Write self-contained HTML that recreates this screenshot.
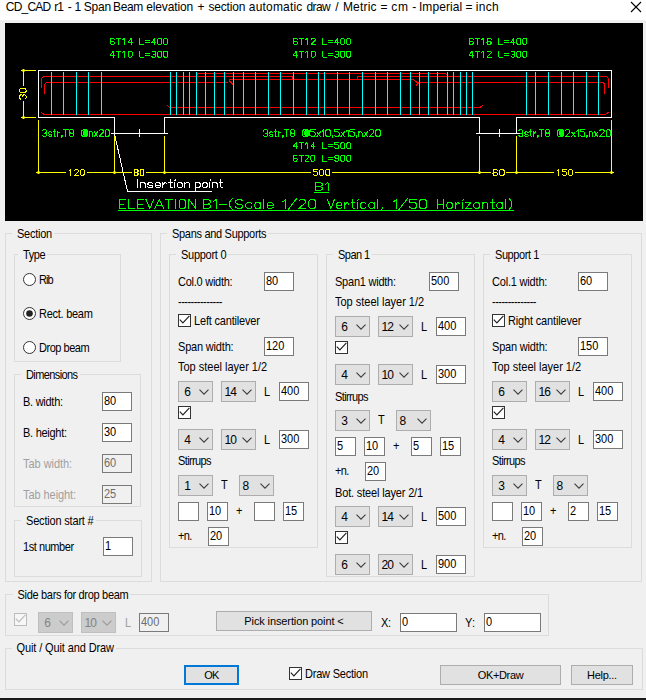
<!DOCTYPE html>
<html><head><meta charset="utf-8"><title>CD_CAD</title>
<style>
*{box-sizing:border-box}
html,body{margin:0;padding:0}
body{width:646px;height:700px;position:relative;overflow:hidden;background:#f0f0f0;font-family:"Liberation Sans",sans-serif;font-size:11px;color:#000}
.abs{position:absolute}
.tw{position:absolute;top:-1px;font-size:12px;line-height:16px;white-space:pre;color:#000;transform:scaleY(1.08);transform-origin:0 60%}
.t{position:absolute;white-space:pre;line-height:13px;font-size:11px;transform:scaleY(1.1);transform-origin:0 50%}
.gl{background:#f0f0f0}
.dl{color:#a0a0a0}
.g{position:absolute;border:1px solid #dcdcdc}
.in{position:absolute;border:1px solid #7a7a7a;background:#fff;padding:0 0 0 1px;white-space:pre;overflow:hidden}
.v{display:inline-block;transform:scaleY(1.1);transform-origin:0 50%}
.in.dis{background:#f0f0f0;color:#6d6d6d}
.cb{position:absolute;border:1px solid #adadad;background:#e1e1e1;padding:0 0 0 6px;white-space:pre;font-size:12px}
.cb .v{transform:scaleY(1.12)}
.cb.dis{background:#cccccc;border-color:#bfbfbf;color:#838383}
.chev{position:absolute}
.ck{position:absolute;width:13px;height:13px;border:1px solid #333;background:#fff}
.bt{position:absolute;border:1px solid #adadad;background:#e1e1e1;text-align:center;white-space:pre}
.bt.df{border:2px solid #0078d7}
</style></head>
<body>
<div class="abs" style="left:0;top:0;width:646px;height:20px;background:#fff"></div>
<span class="tw" style="left:5.8px;letter-spacing:-0.79px">CD_CAD</span>
<span class="tw" style="left:54.15px;letter-spacing:-1.0px">r1</span>
<span class="tw" style="left:67.75px;letter-spacing:0px">-</span>
<span class="tw" style="left:74.53px;letter-spacing:0px">1</span>
<span class="tw" style="left:83.8px;letter-spacing:-0.25px">Span</span>
<span class="tw" style="left:113.1px;letter-spacing:-0.417px">Beam</span>
<span class="tw" style="left:146.2px;letter-spacing:-0.131px">elevation</span>
<span class="tw" style="left:197.55px;letter-spacing:0px">+</span>
<span class="tw" style="left:208.45px;letter-spacing:-0.183px">section</span>
<span class="tw" style="left:248.8px;letter-spacing:0.194px">automatic</span>
<span class="tw" style="left:306.6px;letter-spacing:-0.667px">draw</span>
<span class="tw" style="left:335.32px;letter-spacing:0px">/</span>
<span class="tw" style="left:342.9px;letter-spacing:0.19px">Metric</span>
<span class="tw" style="left:380.4px;letter-spacing:0px">=</span>
<span class="tw" style="left:391.3px;letter-spacing:0.75px">cm</span>
<span class="tw" style="left:412.35px;letter-spacing:0px">-</span>
<span class="tw" style="left:418.9px;letter-spacing:0.086px">Imperial</span>
<span class="tw" style="left:465.4px;letter-spacing:0px">=</span>
<span class="tw" style="left:475.75px;letter-spacing:0.333px">inch</span>
<svg class="abs" style="left:630px;top:1px" width="12" height="12" viewBox="0 0 12 12"><path d="M1 1 L11 11 M11 1 L1 11" stroke="#000" stroke-width="1.1" fill="none"/></svg>
<svg class="abs" style="left:0;top:0" width="646" height="230" viewBox="0 0 646 230">
<rect x="5" y="23" width="638" height="198" fill="#000"/>
<path d="M41.5 88 V79.5 Q41.5 76.5 44.5 76.5 H292.5 V79.5 M357.5 79.5 V76.5 H605.5 Q608.5 76.5 608.5 79.5 V88 M44.5 94 V85.5 Q44.5 82.5 47.5 82.5 H228 M196.5 75 L198 73.5 H445.5 L447.5 75.2 M233 84.5 L229.5 81 L229.5 79.5 H413.5 L418 83.5 L416 85.5 M418 82.5 H602 Q604.5 82.5 604.5 85.5 V94 M41 112 L44 114.5 H605.5 L609 112 M167 105 L169.5 107.5 H480 L483 105" stroke="#ff0000" stroke-width="1" fill="none" shape-rendering="crispEdges"/>
<path d="M51.5 72 V115 M63.5 72 V115 M76.5 72 V115 M88.5 72 V115 M101.5 72 V115 M170.5 72 V115 M176.5 72 V115 M183.5 72 V115 M189.5 72 V115 M196.5 72 V115 M205.5 72 V115 M214.5 72 V115 M224.5 72 V115 M233.5 72 V115 M243.5 72 V115 M255.5 72 V115 M268.5 72 V115 M280.5 72 V115 M293.5 72 V115 M306.5 72 V115 M318.5 72 V115 M324.5 72 V115 M337.5 72 V115 M349.5 72 V115 M362.5 72 V115 M375.5 72 V115 M387.5 72 V115 M400.5 72 V115 M410.5 72 V115 M419.5 72 V115 M428.5 72 V115 M437.5 72 V115 M447.5 72 V115 M453.5 72 V115 M460.5 72 V115 M466.5 72 V115 M472.5 72 V115 M526.5 72 V115 M535.5 72 V115 M548.5 72 V115 M561.5 72 V115 M573.5 72 V115 M586.5 72 V115 M598.5 72 V115" stroke="#00ffff" stroke-width="1" fill="none" shape-rendering="crispEdges"/>
<path d="M38.5 117.5 V70.5 H611.5 V117.5 H516.5 V133.5 M479.5 133.5 V117.5 H164.5 V133.5 M114.5 133.5 V117.5 H38.5 M110.5 133.5 H168 M476 133.5 H520" stroke="#ffffff" stroke-width="1" fill="none" shape-rendering="crispEdges"/>
<path d="M139.5 129 V133 L138.5 133.5 L139.5 134.5 V137 M499.5 129 V133 L498.5 133.5 L499.5 134.5 V137" stroke="#ffffff" stroke-width="1" fill="none"/>
<path d="M114.5 134 L127.5 191.5 H212" stroke="#ffffff" stroke-width="1" fill="none" shape-rendering="crispEdges"/>
<path d="M21 70.5 H36 M21 117.5 H36 M23.5 70.5 V86 M23.5 101 V117.5 M38.5 119.5 V174 M114.5 136 V174 M164.5 136 V174 M479.5 136 V174 M516.5 136 V174 M611.5 119.5 V174 M36 172.5 H66 M87 172.5 H132 M146 172.5 H311 M332 172.5 H491 M506 172.5 H554 M575 172.5 H614" stroke="#ffff00" stroke-width="1" fill="none" shape-rendering="crispEdges"/>
<path d="M37.0 172.5 H40.0 M38.5 171.0 V174.0" stroke="#ffff00" stroke-width="1.6" fill="none"/>
<path d="M113.0 172.5 H116.0 M114.5 171.0 V174.0" stroke="#ffff00" stroke-width="1.6" fill="none"/>
<path d="M163.0 172.5 H166.0 M164.5 171.0 V174.0" stroke="#ffff00" stroke-width="1.6" fill="none"/>
<path d="M478.0 172.5 H481.0 M479.5 171.0 V174.0" stroke="#ffff00" stroke-width="1.6" fill="none"/>
<path d="M515.0 172.5 H518.0 M516.5 171.0 V174.0" stroke="#ffff00" stroke-width="1.6" fill="none"/>
<path d="M610.0 172.5 H613.0 M611.5 171.0 V174.0" stroke="#ffff00" stroke-width="1.6" fill="none"/>
<path d="M22.0 70.5 H25.0 M23.5 69.0 V72.0" stroke="#ffff00" stroke-width="1.6" fill="none"/>
<path d="M22.0 117.5 H25.0 M23.5 116.0 V119.0" stroke="#ffff00" stroke-width="1.6" fill="none"/>
<path d="M68.99 170.90 L70.38 169.50 L70.38 175.50 M74.33 170.50 L75.31 169.50 L77.29 169.50 L78.28 170.50 L78.28 171.50 L74.33 175.50 L78.28 175.50 M81.24 175.50 L83.21 175.50 L84.20 174.50 L84.20 170.50 L83.21 169.50 L81.24 169.50 L80.25 170.50 L80.25 174.50 L81.24 175.50" stroke="#ffff00" stroke-width="1.0" fill="none" stroke-linejoin="round" stroke-linecap="square" shape-rendering="crispEdges"/>
<path d="M135.17 172.50 L134.20 171.50 L134.20 170.50 L135.17 169.50 L137.11 169.50 L138.08 170.50 L138.08 171.50 L137.11 172.50 L135.17 172.50 L134.20 173.50 L134.20 174.50 L135.17 175.50 L137.11 175.50 L138.08 174.50 L138.08 173.50 L137.11 172.50 M140.99 175.50 L142.93 175.50 L143.90 174.50 L143.90 170.50 L142.93 169.50 L140.99 169.50 L140.02 170.50 L140.02 174.50 L140.99 175.50" stroke="#ffff00" stroke-width="1.0" fill="none" stroke-linejoin="round" stroke-linecap="square" shape-rendering="crispEdges"/>
<path d="M313.50 174.50 L314.52 175.50 L316.57 175.50 L317.60 174.50 L317.60 172.50 L316.57 171.50 L313.50 171.50 L313.50 169.50 L317.60 169.50 M320.68 175.50 L322.72 175.50 L323.75 174.50 L323.75 170.50 L322.72 169.50 L320.68 169.50 L319.65 170.50 L319.65 174.50 L320.68 175.50 M326.82 175.50 L328.88 175.50 L329.90 174.50 L329.90 170.50 L328.88 169.50 L326.82 169.50 L325.80 170.50 L325.80 174.50 L326.82 175.50" stroke="#ffff00" stroke-width="1.0" fill="none" stroke-linejoin="round" stroke-linecap="square" shape-rendering="crispEdges"/>
<path d="M497.48 170.50 L496.36 169.50 L494.12 169.50 L493.00 170.50 L493.00 174.50 L494.12 175.50 L496.36 175.50 L497.48 174.50 L497.48 173.50 L496.36 172.50 L494.12 172.50 L493.00 173.50 M500.84 175.50 L503.08 175.50 L504.20 174.50 L504.20 170.50 L503.08 169.50 L500.84 169.50 L499.72 170.50 L499.72 174.50 L500.84 175.50" stroke="#ffff00" stroke-width="1.0" fill="none" stroke-linejoin="round" stroke-linecap="square" shape-rendering="crispEdges"/>
<path d="M557.11 170.90 L558.54 169.50 L558.54 175.50 M562.61 174.50 L563.63 175.50 L565.67 175.50 L566.69 174.50 L566.69 172.50 L565.67 171.50 L562.61 171.50 L562.61 169.50 L566.69 169.50 M569.74 175.50 L571.78 175.50 L572.80 174.50 L572.80 170.50 L571.78 169.50 L569.74 169.50 L568.72 170.50 L568.72 174.50 L569.74 175.50" stroke="#ffff00" stroke-width="1.0" fill="none" stroke-linejoin="round" stroke-linecap="square" shape-rendering="crispEdges"/>
<g transform="translate(26,99.5) rotate(-90)">
<path d="M0.50 -5.50 L1.54 -6.60 L3.62 -6.60 L4.66 -5.50 L4.66 -4.40 L3.62 -3.30 L2.58 -3.30 M3.62 -3.30 L4.66 -2.20 L4.66 -1.10 L3.62 0.00 L1.54 0.00 L0.50 -1.10 M7.78 0.00 L9.86 0.00 L10.90 -1.10 L10.90 -5.50 L9.86 -6.60 L7.78 -6.60 L6.74 -5.50 L6.74 -1.10 L7.78 0.00" stroke="#ffff00" stroke-width="1.0" fill="none" stroke-linejoin="round" stroke-linecap="square" shape-rendering="crispEdges"/>
</g>
<path d="M114.34 39.33 L113.36 38.30 L111.39 38.30 L110.40 39.33 L110.40 43.47 L111.39 44.50 L113.36 44.50 L114.34 43.47 L114.34 42.43 L113.36 41.40 L111.39 41.40 L110.40 42.43 M116.32 38.30 L120.26 38.30 M118.29 38.30 L118.29 44.50 M122.83 39.75 L124.21 38.30 L124.21 44.50 M131.11 44.50 L131.11 38.30 L128.15 42.43 L132.10 42.43 M139.99 38.30 L139.99 44.50 L143.93 44.50 M145.90 42.43 L149.85 42.43 M145.90 40.37 L149.85 40.37 M154.78 44.50 L154.78 38.30 L151.82 42.43 L155.77 42.43 M158.72 44.50 L160.70 44.50 L161.68 43.47 L161.68 39.33 L160.70 38.30 L158.72 38.30 L157.74 39.33 L157.74 43.47 L158.72 44.50 M164.64 44.50 L166.61 44.50 L167.60 43.47 L167.60 39.33 L166.61 38.30 L164.64 38.30 L163.66 39.33 L163.66 43.47 L164.64 44.50" stroke="#00ff00" stroke-width="1.0" fill="none" stroke-linejoin="round" stroke-linecap="square" shape-rendering="crispEdges"/>
<path d="M113.36 57.20 L113.36 51.00 L110.40 55.13 L114.34 55.13 M116.32 51.00 L120.26 51.00 M118.29 51.00 L118.29 57.20 M122.83 52.45 L124.21 51.00 L124.21 57.20 M129.14 57.20 L131.11 57.20 L132.10 56.17 L132.10 52.03 L131.11 51.00 L129.14 51.00 L128.15 52.03 L128.15 56.17 L129.14 57.20 M139.99 51.00 L139.99 57.20 L143.93 57.20 M145.90 55.13 L149.85 55.13 M145.90 53.07 L149.85 53.07 M151.82 52.03 L152.81 51.00 L154.78 51.00 L155.77 52.03 L155.77 53.07 L154.78 54.10 L153.79 54.10 M154.78 54.10 L155.77 55.13 L155.77 56.17 L154.78 57.20 L152.81 57.20 L151.82 56.17 M158.72 57.20 L160.70 57.20 L161.68 56.17 L161.68 52.03 L160.70 51.00 L158.72 51.00 L157.74 52.03 L157.74 56.17 L158.72 57.20 M164.64 57.20 L166.61 57.20 L167.60 56.17 L167.60 52.03 L166.61 51.00 L164.64 51.00 L163.66 52.03 L163.66 56.17 L164.64 57.20" stroke="#00ff00" stroke-width="1.0" fill="none" stroke-linejoin="round" stroke-linecap="square" shape-rendering="crispEdges"/>
<path d="M297.34 39.33 L296.35 38.30 L294.38 38.30 L293.40 39.33 L293.40 43.47 L294.38 44.50 L296.35 44.50 L297.34 43.47 L297.34 42.43 L296.35 41.40 L294.38 41.40 L293.40 42.43 M299.31 38.30 L303.24 38.30 M301.28 38.30 L301.28 44.50 M305.80 39.75 L307.18 38.30 L307.18 44.50 M311.12 39.33 L312.11 38.30 L314.07 38.30 L315.06 39.33 L315.06 40.37 L311.12 44.50 L315.06 44.50 M322.93 38.30 L322.93 44.50 L326.87 44.50 M328.84 42.43 L332.78 42.43 M328.84 40.37 L332.78 40.37 M337.70 44.50 L337.70 38.30 L334.75 42.43 L338.69 42.43 M341.64 44.50 L343.61 44.50 L344.59 43.47 L344.59 39.33 L343.61 38.30 L341.64 38.30 L340.66 39.33 L340.66 43.47 L341.64 44.50 M347.55 44.50 L349.52 44.50 L350.50 43.47 L350.50 39.33 L349.52 38.30 L347.55 38.30 L346.56 39.33 L346.56 43.47 L347.55 44.50" stroke="#00ff00" stroke-width="1.0" fill="none" stroke-linejoin="round" stroke-linecap="square" shape-rendering="crispEdges"/>
<path d="M296.35 57.20 L296.35 51.00 L293.40 55.13 L297.34 55.13 M299.31 51.00 L303.24 51.00 M301.28 51.00 L301.28 57.20 M305.80 52.45 L307.18 51.00 L307.18 57.20 M312.11 57.20 L314.07 57.20 L315.06 56.17 L315.06 52.03 L314.07 51.00 L312.11 51.00 L311.12 52.03 L311.12 56.17 L312.11 57.20 M322.93 51.00 L322.93 57.20 L326.87 57.20 M328.84 55.13 L332.78 55.13 M328.84 53.07 L332.78 53.07 M334.75 52.03 L335.73 51.00 L337.70 51.00 L338.69 52.03 L338.69 53.07 L337.70 54.10 L336.72 54.10 M337.70 54.10 L338.69 55.13 L338.69 56.17 L337.70 57.20 L335.73 57.20 L334.75 56.17 M341.64 57.20 L343.61 57.20 L344.59 56.17 L344.59 52.03 L343.61 51.00 L341.64 51.00 L340.66 52.03 L340.66 56.17 L341.64 57.20 M347.55 57.20 L349.52 57.20 L350.50 56.17 L350.50 52.03 L349.52 51.00 L347.55 51.00 L346.56 52.03 L346.56 56.17 L347.55 57.20" stroke="#00ff00" stroke-width="1.0" fill="none" stroke-linejoin="round" stroke-linecap="square" shape-rendering="crispEdges"/>
<path d="M473.17 39.33 L472.18 38.30 L470.19 38.30 L469.20 39.33 L469.20 43.47 L470.19 44.50 L472.18 44.50 L473.17 43.47 L473.17 42.43 L472.18 41.40 L470.19 41.40 L469.20 42.43 M475.16 38.30 L479.13 38.30 M477.14 38.30 L477.14 44.50 M481.71 39.75 L483.10 38.30 L483.10 44.50 M491.05 39.33 L490.06 38.30 L488.07 38.30 L487.08 39.33 L487.08 43.47 L488.07 44.50 L490.06 44.50 L491.05 43.47 L491.05 42.43 L490.06 41.40 L488.07 41.40 L487.08 42.43 M498.99 38.30 L498.99 44.50 L502.97 44.50 M504.95 42.43 L508.92 42.43 M504.95 40.37 L508.92 40.37 M513.89 44.50 L513.89 38.30 L510.91 42.43 L514.88 42.43 M517.86 44.50 L519.85 44.50 L520.84 43.47 L520.84 39.33 L519.85 38.30 L517.86 38.30 L516.87 39.33 L516.87 43.47 L517.86 44.50 M523.82 44.50 L525.81 44.50 L526.80 43.47 L526.80 39.33 L525.81 38.30 L523.82 38.30 L522.83 39.33 L522.83 43.47 L523.82 44.50" stroke="#00ff00" stroke-width="1.0" fill="none" stroke-linejoin="round" stroke-linecap="square" shape-rendering="crispEdges"/>
<path d="M472.18 57.20 L472.18 51.00 L469.20 55.13 L473.17 55.13 M475.16 51.00 L479.13 51.00 M477.14 51.00 L477.14 57.20 M481.71 52.45 L483.10 51.00 L483.10 57.20 M487.08 52.03 L488.07 51.00 L490.06 51.00 L491.05 52.03 L491.05 53.07 L487.08 57.20 L491.05 57.20 M498.99 51.00 L498.99 57.20 L502.97 57.20 M504.95 55.13 L508.92 55.13 M504.95 53.07 L508.92 53.07 M510.91 52.03 L511.90 51.00 L513.89 51.00 L514.88 52.03 L514.88 53.07 L513.89 54.10 L512.90 54.10 M513.89 54.10 L514.88 55.13 L514.88 56.17 L513.89 57.20 L511.90 57.20 L510.91 56.17 M517.86 57.20 L519.85 57.20 L520.84 56.17 L520.84 52.03 L519.85 51.00 L517.86 51.00 L516.87 52.03 L516.87 56.17 L517.86 57.20 M523.82 57.20 L525.81 57.20 L526.80 56.17 L526.80 52.03 L525.81 51.00 L523.82 51.00 L522.83 52.03 L522.83 56.17 L523.82 57.20" stroke="#00ff00" stroke-width="1.0" fill="none" stroke-linejoin="round" stroke-linecap="square" shape-rendering="crispEdges"/>
<path d="M296.08 148.80 L296.08 142.60 L293.10 146.73 L297.07 146.73 M299.06 142.60 L303.03 142.60 M301.04 142.60 L301.04 148.80 M305.61 144.05 L307.00 142.60 L307.00 148.80 M313.96 148.80 L313.96 142.60 L310.98 146.73 L314.95 146.73 M322.89 142.60 L322.89 148.80 L326.87 148.80 M328.85 146.73 L332.82 146.73 M328.85 144.67 L332.82 144.67 M334.81 147.77 L335.80 148.80 L337.79 148.80 L338.78 147.77 L338.78 145.70 L337.79 144.67 L334.81 144.67 L334.81 142.60 L338.78 142.60 M341.76 148.80 L343.75 148.80 L344.74 147.77 L344.74 143.63 L343.75 142.60 L341.76 142.60 L340.77 143.63 L340.77 147.77 L341.76 148.80 M347.72 148.80 L349.71 148.80 L350.70 147.77 L350.70 143.63 L349.71 142.60 L347.72 142.60 L346.73 143.63 L346.73 147.77 L347.72 148.80" stroke="#00ff00" stroke-width="1.0" fill="none" stroke-linejoin="round" stroke-linecap="square" shape-rendering="crispEdges"/>
<path d="M297.07 156.13 L296.08 155.10 L294.09 155.10 L293.10 156.13 L293.10 160.27 L294.09 161.30 L296.08 161.30 L297.07 160.27 L297.07 159.23 L296.08 158.20 L294.09 158.20 L293.10 159.23 M299.06 155.10 L303.03 155.10 M301.04 155.10 L301.04 161.30 M305.02 156.13 L306.01 155.10 L308.00 155.10 L308.99 156.13 L308.99 157.17 L305.02 161.30 L308.99 161.30 M311.97 161.30 L313.96 161.30 L314.95 160.27 L314.95 156.13 L313.96 155.10 L311.97 155.10 L310.98 156.13 L310.98 160.27 L311.97 161.30 M322.89 155.10 L322.89 161.30 L326.87 161.30 M328.85 159.23 L332.82 159.23 M328.85 157.17 L332.82 157.17 M334.81 160.27 L335.80 161.30 L337.79 161.30 L338.78 160.27 L338.78 156.13 L337.79 155.10 L335.80 155.10 L334.81 156.13 L334.81 157.17 L335.80 158.20 L337.79 158.20 L338.78 157.17 M341.76 161.30 L343.75 161.30 L344.74 160.27 L344.74 156.13 L343.75 155.10 L341.76 155.10 L340.77 156.13 L340.77 160.27 L341.76 161.30 M347.72 161.30 L349.71 161.30 L350.70 160.27 L350.70 156.13 L349.71 155.10 L347.72 155.10 L346.73 156.13 L346.73 160.27 L347.72 161.30" stroke="#00ff00" stroke-width="1.0" fill="none" stroke-linejoin="round" stroke-linecap="square" shape-rendering="crispEdges"/>
<path d="M42.30 130.83 L43.37 129.70 L45.52 129.70 L46.59 130.83 L46.59 131.97 L45.52 133.10 L44.44 133.10 M45.52 133.10 L46.59 134.23 L46.59 135.37 L45.52 136.50 L43.37 136.50 L42.30 135.37 M51.81 132.76 L50.97 131.97 L49.29 131.97 L48.45 132.76 L48.45 133.44 L49.29 134.23 L50.97 134.23 L51.81 135.03 L51.81 135.71 L50.97 136.50 L49.29 136.50 L48.45 135.71 M54.38 129.70 L54.38 135.37 L54.94 136.50 L55.72 136.50 M53.48 131.97 L55.72 131.97 M57.40 131.97 L57.40 136.50 M57.40 134.23 L58.66 131.97 L59.28 131.97 L59.91 133.10 M61.78 136.50 L62.24 136.50 L62.24 135.71 L61.78 135.71 L61.78 136.50 M62.01 136.50 L61.78 137.86 M63.73 129.70 L68.02 129.70 M65.88 129.70 L65.88 136.50 M70.58 133.10 L69.51 131.97 L69.51 130.83 L70.58 129.70 L72.73 129.70 L73.80 130.83 L73.80 131.97 L72.73 133.10 L70.58 133.10 L69.51 134.23 L69.51 135.37 L70.58 136.50 L72.73 136.50 L73.80 135.37 L73.80 134.23 L72.73 133.10" stroke="#00ff00" stroke-width="1.0" fill="none" stroke-linejoin="round" stroke-linecap="square" shape-rendering="crispEdges"/>
<path d="M83.33 136.50 L86.40 136.50 L87.93 135.37 L87.93 130.83 L86.40 129.70 L83.33 129.70 L81.80 130.83 L81.80 135.37 L83.33 136.50 M83.64 134.80 L83.64 131.40 M84.87 135.37 L84.87 130.83 M85.25 135.37 L85.25 130.83 M85.63 135.37 L85.63 130.83 M86.01 135.37 L86.01 130.83 M86.40 135.37 L86.40 130.83 M86.78 135.37 L86.78 130.83 M87.16 135.37 L87.16 130.83 M87.55 135.37 L87.55 130.83 M87.93 135.37 L87.93 130.83 M89.33 131.97 L89.33 136.50 M89.33 133.10 L90.14 131.97 L91.76 131.97 L92.57 133.10 L92.57 136.50 M94.32 131.97 L97.48 136.50 M94.32 136.50 L97.48 131.97 M99.23 130.83 L100.26 129.70 L102.32 129.70 L103.34 130.83 L103.34 131.97 L99.23 136.50 L103.34 136.50 M106.15 136.50 L108.25 136.50 L109.30 135.37 L109.30 130.83 L108.25 129.70 L106.15 129.70 L105.10 130.83 L105.10 135.37 L106.15 136.50" stroke="#00ff00" stroke-width="1.0" fill="none" stroke-linejoin="round" stroke-linecap="square" shape-rendering="crispEdges"/>
<path d="M263.50 130.83 L264.56 129.70 L266.68 129.70 L267.75 130.83 L267.75 131.97 L266.68 133.10 L265.62 133.10 M266.68 133.10 L267.75 134.23 L267.75 135.37 L266.68 136.50 L264.56 136.50 L263.50 135.37 M272.92 132.76 L272.08 131.97 L270.42 131.97 L269.59 132.76 L269.59 133.44 L270.42 134.23 L272.08 134.23 L272.92 135.03 L272.92 135.71 L272.08 136.50 L270.42 136.50 L269.59 135.71 M275.46 129.70 L275.46 135.37 L276.02 136.50 L276.79 136.50 M274.58 131.97 L276.79 131.97 M278.45 131.97 L278.45 136.50 M278.45 134.23 L279.70 131.97 L280.32 131.97 L280.95 133.10 M282.79 136.50 L283.25 136.50 L283.25 135.71 L282.79 135.71 L282.79 136.50 M283.02 136.50 L282.79 137.86 M284.73 129.70 L288.98 129.70 M286.85 129.70 L286.85 136.50 M291.52 133.10 L290.45 131.97 L290.45 130.83 L291.52 129.70 L293.64 129.70 L294.70 130.83 L294.70 131.97 L293.64 133.10 L291.52 133.10 L290.45 134.23 L290.45 135.37 L291.52 136.50 L293.64 136.50 L294.70 135.37 L294.70 134.23 L293.64 133.10" stroke="#00ff00" stroke-width="1.0" fill="none" stroke-linejoin="round" stroke-linecap="square" shape-rendering="crispEdges"/>
<path d="M304.06 136.50 L307.38 136.50 L309.04 135.37 L309.04 130.83 L307.38 129.70 L304.06 129.70 L302.40 130.83 L302.40 135.37 L304.06 136.50 M304.39 134.80 L304.39 131.40 M305.72 135.37 L305.72 130.83 M306.14 135.37 L306.14 130.83 M306.55 135.37 L306.55 130.83 M306.97 135.37 L306.97 130.83 M307.38 135.37 L307.38 130.83 M307.80 135.37 L307.80 130.83 M308.21 135.37 L308.21 130.83 M308.63 135.37 L308.63 130.83 M309.04 135.37 L309.04 130.83 M310.56 135.37 L311.67 136.50 L313.90 136.50 L315.02 135.37 L315.02 133.10 L313.90 131.97 L310.56 131.97 L310.56 129.70 L315.02 129.70 M316.92 131.97 L320.33 136.50 M316.92 136.50 L320.33 131.97 M322.23 131.29 L323.94 129.70 L323.94 136.50 M326.98 136.50 L329.25 136.50 L330.39 135.37 L330.39 130.83 L329.25 129.70 L326.98 129.70 L325.84 130.83 L325.84 135.37 L326.98 136.50 M332.29 136.50 L332.76 136.50 L332.76 135.71 L332.29 135.71 L332.29 136.50 M332.53 136.50 L332.29 137.86 M334.66 135.37 L335.78 136.50 L338.01 136.50 L339.12 135.37 L339.12 133.10 L338.01 131.97 L334.66 131.97 L334.66 129.70 L339.12 129.70 M341.02 131.97 L344.43 136.50 M341.02 136.50 L344.43 131.97 M346.33 131.29 L348.04 129.70 L348.04 136.50 M349.94 135.37 L351.05 136.50 L353.28 136.50 L354.40 135.37 L354.40 133.10 L353.28 131.97 L349.94 131.97 L349.94 129.70 L354.40 129.70 M356.29 136.50 L356.77 136.50 L356.77 135.71 L356.29 135.71 L356.29 136.50 M356.53 136.50 L356.29 137.86 M358.67 131.97 L358.67 136.50 M358.67 133.10 L359.54 131.97 L361.30 131.97 L362.18 133.10 L362.18 136.50 M364.07 131.97 L367.49 136.50 M364.07 136.50 L367.49 131.97 M369.39 130.83 L370.50 129.70 L372.73 129.70 L373.85 130.83 L373.85 131.97 L369.39 136.50 L373.85 136.50 M376.88 136.50 L379.16 136.50 L380.30 135.37 L380.30 130.83 L379.16 129.70 L376.88 129.70 L375.75 130.83 L375.75 135.37 L376.88 136.50" stroke="#00ff00" stroke-width="1.0" fill="none" stroke-linejoin="round" stroke-linecap="square" shape-rendering="crispEdges"/>
<path d="M518.80 130.83 L519.85 129.70 L521.94 129.70 L522.99 130.83 L522.99 131.97 L521.94 133.10 L520.90 133.10 M521.94 133.10 L522.99 134.23 L522.99 135.37 L521.94 136.50 L519.85 136.50 L518.80 135.37 M528.09 132.76 L527.27 131.97 L525.63 131.97 L524.81 132.76 L524.81 133.44 L525.63 134.23 L527.27 134.23 L528.09 135.03 L528.09 135.71 L527.27 136.50 L525.63 136.50 L524.81 135.71 M530.61 129.70 L530.61 135.37 L531.16 136.50 L531.92 136.50 M529.73 131.97 L531.92 131.97 M533.56 131.97 L533.56 136.50 M533.56 134.23 L534.79 131.97 L535.41 131.97 L536.02 133.10 M537.84 136.50 L538.30 136.50 L538.30 135.71 L537.84 135.71 L537.84 136.50 M538.07 136.50 L537.84 137.86 M539.76 129.70 L543.95 129.70 M541.85 129.70 L541.85 136.50 M546.46 133.10 L545.41 131.97 L545.41 130.83 L546.46 129.70 L548.55 129.70 L549.60 130.83 L549.60 131.97 L548.55 133.10 L546.46 133.10 L545.41 134.23 L545.41 135.37 L546.46 136.50 L548.55 136.50 L549.60 135.37 L549.60 134.23 L548.55 133.10" stroke="#00ff00" stroke-width="1.0" fill="none" stroke-linejoin="round" stroke-linecap="square" shape-rendering="crispEdges"/>
<path d="M559.04 136.50 L562.32 136.50 L563.96 135.37 L563.96 130.83 L562.32 129.70 L559.04 129.70 L557.40 130.83 L557.40 135.37 L559.04 136.50 M559.37 134.80 L559.37 131.40 M560.68 135.37 L560.68 130.83 M561.09 135.37 L561.09 130.83 M561.50 135.37 L561.50 130.83 M561.91 135.37 L561.91 130.83 M562.32 135.37 L562.32 130.83 M562.73 135.37 L562.73 130.83 M563.14 135.37 L563.14 130.83 M563.55 135.37 L563.55 130.83 M563.96 135.37 L563.96 130.83 M565.45 130.83 L566.55 129.70 L568.76 129.70 L569.86 130.83 L569.86 131.97 L565.45 136.50 L569.86 136.50 M571.73 131.97 L575.10 136.50 M571.73 136.50 L575.10 131.97 M576.97 131.29 L578.66 129.70 L578.66 136.50 M580.53 135.37 L581.63 136.50 L583.83 136.50 L584.93 135.37 L584.93 133.10 L583.83 131.97 L580.53 131.97 L580.53 129.70 L584.93 129.70 M586.81 136.50 L587.27 136.50 L587.27 135.71 L586.81 135.71 L586.81 136.50 M587.04 136.50 L586.81 137.86 M589.15 131.97 L589.15 136.50 M589.15 133.10 L590.01 131.97 L591.75 131.97 L592.61 133.10 L592.61 136.50 M594.49 131.97 L597.86 136.50 M594.49 136.50 L597.86 131.97 M599.73 130.83 L600.83 129.70 L603.03 129.70 L604.13 130.83 L604.13 131.97 L599.73 136.50 L604.13 136.50 M607.13 136.50 L609.38 136.50 L610.50 135.37 L610.50 130.83 L609.38 129.70 L607.13 129.70 L606.00 130.83 L606.00 135.37 L607.13 136.50" stroke="#00ff00" stroke-width="1.0" fill="none" stroke-linejoin="round" stroke-linecap="square" shape-rendering="crispEdges"/>
<path d="M137.20 187.70 L137.20 179.90 M140.26 182.50 L140.26 187.70 M140.26 183.80 L141.49 182.50 L143.95 182.50 L145.18 183.80 L145.18 187.70 M152.64 183.41 L151.44 182.50 L149.04 182.50 L147.85 183.41 L147.85 184.19 L149.04 185.10 L151.44 185.10 L152.64 186.01 L152.64 186.79 L151.44 187.70 L149.04 187.70 L147.85 186.79 M155.30 185.10 L160.22 185.10 L160.22 183.80 L158.99 182.50 L156.53 182.50 L155.30 183.80 L155.30 186.40 L156.53 187.70 L158.99 187.70 L160.22 186.66 M162.88 182.50 L162.88 187.70 M162.88 185.10 L164.68 182.50 L165.58 182.50 L166.48 183.80 M170.15 179.90 L170.15 186.40 L170.95 187.70 L172.07 187.70 M168.87 182.50 L172.07 182.50 M174.60 182.50 L174.60 187.70 M174.60 180.94 L175.55 179.64 M178.62 187.70 L181.08 187.70 L182.31 186.40 L182.31 183.80 L181.08 182.50 L178.62 182.50 L177.39 183.80 L177.39 186.40 L178.62 187.70 M184.98 182.50 L184.98 187.70 M184.98 183.80 L186.21 182.50 L188.67 182.50 L189.90 183.80 L189.90 187.70" stroke="#ffffff" stroke-width="1.0" fill="none" stroke-linejoin="round" stroke-linecap="square" shape-rendering="crispEdges"/>
<path d="M195.50 182.50 L195.50 190.30 M195.50 183.80 L196.66 182.50 L198.97 182.50 L200.13 183.80 L200.13 186.40 L198.97 187.70 L196.66 187.70 L195.50 186.40 M203.79 187.70 L206.10 187.70 L207.26 186.40 L207.26 183.80 L206.10 182.50 L203.79 182.50 L202.63 183.80 L202.63 186.40 L203.79 187.70 M209.89 182.50 L209.89 187.70 M209.89 180.94 L210.79 179.64 M212.52 182.50 L212.52 187.70 M212.52 183.80 L213.67 182.50 L215.99 182.50 L217.15 183.80 L217.15 187.70 M220.60 179.90 L220.60 186.40 L221.35 187.70 L222.40 187.70 M219.40 182.50 L222.40 182.50" stroke="#ffffff" stroke-width="1.0" fill="none" stroke-linejoin="round" stroke-linecap="square" shape-rendering="crispEdges"/>
<path d="M315.40 190.50 L315.40 182.50 L320.52 182.50 L322.23 183.83 L322.23 185.17 L320.52 186.50 L315.40 186.50 M320.52 186.50 L322.23 187.83 L322.23 189.17 L320.52 190.50 L315.40 190.50 M325.27 184.37 L328.00 182.50 L328.00 190.50" stroke="#00ff00" stroke-width="1.0" fill="none" stroke-linejoin="round" stroke-linecap="square" shape-rendering="crispEdges"/>
<path d="M314 192.5 L329 192.5" stroke="#00ff00" stroke-width="1" fill="none" shape-rendering="crispEdges"/>
<path d="M125.34 208.50 L119.20 208.50 L119.20 199.50 L125.34 199.50 M119.20 204.00 L123.80 204.00 M128.49 199.50 L128.49 208.50 L134.47 208.50 M143.76 208.50 L137.62 208.50 L137.62 199.50 L143.76 199.50 M137.62 204.00 L142.22 204.00 M146.04 199.50 L149.82 208.50 L153.59 199.50 M154.93 208.50 L159.26 199.50 L163.59 208.50 M156.45 205.50 L162.07 205.50 M165.16 199.50 L172.40 199.50 M168.78 199.50 L168.78 208.50 M175.39 208.50 L175.39 199.50 M180.71 208.50 L184.09 208.50 L185.78 207.00 L185.78 201.00 L184.09 199.50 L180.71 199.50 L179.01 201.00 L179.01 207.00 L180.71 208.50 M188.93 208.50 L188.93 199.50 L195.70 208.50 L195.70 199.50" stroke="#00ff00" stroke-width="1.0" fill="none" stroke-linejoin="round" stroke-linecap="square" shape-rendering="crispEdges"/>
<path d="M203.50 208.50 L203.50 199.50 L208.67 199.50 L210.39 201.00 L210.39 202.50 L208.67 204.00 L203.50 204.00 M208.67 204.00 L210.39 205.50 L210.39 207.00 L208.67 208.50 L203.50 208.50 M213.45 201.60 L216.21 199.50 L216.21 208.50 M219.27 204.00 L226.77 204.00 M232.59 198.30 L229.83 201.60 L229.83 206.40 L232.59 209.70 M235.65 207.00 L237.41 208.50 L240.93 208.50 L242.69 207.00 L242.69 205.50 L240.93 204.00 L237.41 204.00 L235.65 202.50 L235.65 201.00 L237.41 199.50 L240.93 199.50 L242.69 201.00 M251.72 204.00 L250.23 202.50 L247.24 202.50 L245.75 204.00 L245.75 207.00 L247.24 208.50 L250.23 208.50 L251.72 207.00 M260.29 208.50 L260.29 202.50 M260.29 204.00 L258.92 202.50 L256.16 202.50 L254.78 204.00 L254.78 207.00 L256.16 208.50 L258.92 208.50 L260.29 207.00 M263.81 199.50 L263.81 208.50 M267.34 205.50 L273.00 205.50 L273.00 204.00 L271.58 202.50 L268.75 202.50 L267.34 204.00 L267.34 207.00 L268.75 208.50 L271.58 208.50 L273.00 207.30" stroke="#00ff00" stroke-width="1.0" fill="none" stroke-linejoin="round" stroke-linecap="square" shape-rendering="crispEdges"/>
<path d="M283.00 201.60 L285.66 199.50 L285.66 208.50 M287.88 210.00 L296.59 198.60 M298.81 201.00 L300.55 199.50 L304.02 199.50 L305.75 201.00 L305.75 202.50 L298.81 208.50 L305.75 208.50 M310.48 208.50 L314.03 208.50 L315.80 207.00 L315.80 201.00 L314.03 199.50 L310.48 199.50 L308.71 201.00 L308.71 207.00 L310.48 208.50" stroke="#00ff00" stroke-width="1.0" fill="none" stroke-linejoin="round" stroke-linecap="square" shape-rendering="crispEdges"/>
<path d="M327.50 199.50 L330.96 208.50 L334.42 199.50 M336.51 205.50 L341.84 205.50 L341.84 204.00 L340.51 202.50 L337.84 202.50 L336.51 204.00 L336.51 207.00 L337.84 208.50 L340.51 208.50 L341.84 207.30 M344.72 202.50 L344.72 208.50 M344.72 205.50 L346.67 202.50 L347.64 202.50 L348.62 204.00 M352.59 199.50 L352.59 207.00 L353.46 208.50 L354.67 208.50 M351.21 202.50 L354.67 202.50 M357.41 202.50 L357.41 208.50 M357.41 200.70 L358.45 199.20 M366.06 204.00 L364.65 202.50 L361.84 202.50 L360.44 204.00 L360.44 207.00 L361.84 208.50 L364.65 208.50 L366.06 207.00 M374.13 208.50 L374.13 202.50 M374.13 204.00 L372.83 202.50 L370.24 202.50 L368.94 204.00 L368.94 207.00 L370.24 208.50 L372.83 208.50 L374.13 207.00 M377.44 199.50 L377.44 208.50 M382.20 207.75 L382.20 208.50 L380.76 210.45" stroke="#00ff00" stroke-width="1.0" fill="none" stroke-linejoin="round" stroke-linecap="square" shape-rendering="crispEdges"/>
<path d="M393.80 201.60 L396.46 199.50 L396.46 208.50 M398.68 210.00 L407.39 198.60 M409.61 207.00 L411.35 208.50 L414.82 208.50 L416.55 207.00 L416.55 204.00 L414.82 202.50 L409.61 202.50 L409.61 199.50 L416.55 199.50 M421.28 208.50 L424.83 208.50 L426.60 207.00 L426.60 201.00 L424.83 199.50 L421.28 199.50 L419.51 201.00 L419.51 207.00 L421.28 208.50" stroke="#00ff00" stroke-width="1.0" fill="none" stroke-linejoin="round" stroke-linecap="square" shape-rendering="crispEdges"/>
<path d="M437.30 208.50 L437.30 199.50 M443.83 208.50 L443.83 199.50 M437.30 204.00 L443.83 204.00 M448.18 208.50 L450.93 208.50 L452.30 207.00 L452.30 204.00 L450.93 202.50 L448.18 202.50 L446.80 204.00 L446.80 207.00 L448.18 208.50 M455.27 202.50 L455.27 208.50 M455.27 205.50 L457.27 202.50 L458.28 202.50 L459.28 204.00 M462.40 202.50 L462.40 208.50 M462.40 200.70 L463.47 199.20 M465.52 202.50 L471.01 202.50 L465.52 208.50 L471.01 208.50 M475.35 208.50 L478.10 208.50 L479.47 207.00 L479.47 204.00 L478.10 202.50 L475.35 202.50 L473.98 204.00 L473.98 207.00 L475.35 208.50 M482.44 202.50 L482.44 208.50 M482.44 204.00 L483.82 202.50 L486.57 202.50 L487.94 204.00 L487.94 208.50 M492.04 199.50 L492.04 207.00 L492.93 208.50 L494.18 208.50 M490.61 202.50 L494.18 202.50 M502.20 208.50 L502.20 202.50 M502.20 204.00 L500.86 202.50 L498.19 202.50 L496.85 204.00 L496.85 207.00 L498.19 208.50 L500.86 208.50 L502.20 207.00 M505.61 199.50 L505.61 208.50 M509.03 198.30 L511.70 201.60 L511.70 206.40 L509.03 209.70" stroke="#00ff00" stroke-width="1.0" fill="none" stroke-linejoin="round" stroke-linecap="square" shape-rendering="crispEdges"/>
<path d="M118 210.5 L514 210.5" stroke="#00ff00" stroke-width="1" fill="none" shape-rendering="crispEdges"/>
</svg>
<div class="g" style="left:5px;top:233px;width:147px;height:349px"></div>
<span class="t gl" style="left:12px;top:227.8px;padding:0 2px 0 5px;letter-spacing:-0.262px;">Section</span>
<div class="g" style="left:14px;top:254px;width:107px;height:108px"></div>
<span class="t gl" style="left:18px;top:248.8px;padding:0 2px 0 5px;letter-spacing:-0.377px;">Type</span>
<svg class="abs" style="left:23px;top:273px" width="13" height="13" viewBox="0 0 13 13"><circle cx="6.5" cy="6.5" r="6" fill="#fff" stroke="#333" stroke-width="1"/></svg>
<span class="t " style="left:39px;top:273.8px;letter-spacing:-0.944px;">Rib</span>
<svg class="abs" style="left:23px;top:307px" width="13" height="13" viewBox="0 0 13 13"><circle cx="6.5" cy="6.5" r="6" fill="#fff" stroke="#333" stroke-width="1"/><circle cx="6.5" cy="6.5" r="3.3" fill="#222"/></svg>
<span class="t " style="left:39px;top:307.8px;letter-spacing:-0.265px;">Rect. beam</span>
<svg class="abs" style="left:23px;top:341px" width="13" height="13" viewBox="0 0 13 13"><circle cx="6.5" cy="6.5" r="6" fill="#fff" stroke="#333" stroke-width="1"/></svg>
<span class="t " style="left:39px;top:341.8px;letter-spacing:-0.469px;">Drop beam</span>
<div class="g" style="left:14px;top:374px;width:127px;height:133px"></div>
<span class="t gl" style="left:21px;top:368.8px;padding:0 2px 0 5px;letter-spacing:-0.596px;">Dimensions</span>
<span class="t " style="left:23px;top:396.0px;letter-spacing:-0.266px;">B. width:</span>
<div class="in" style="left:102px;top:392px;width:30px;height:19px;line-height:16px"><span class="v">80</span></div>
<span class="t " style="left:23px;top:427.0px;letter-spacing:-0.269px;">B. height:</span>
<div class="in" style="left:102px;top:423px;width:30px;height:19px;line-height:16px"><span class="v">30</span></div>
<span class="t dl" style="left:23px;top:458.0px;letter-spacing:-0.041px;">Tab width:</span>
<div class="in dis" style="left:102px;top:454px;width:30px;height:19px;line-height:16px"><span class="v">60</span></div>
<span class="t dl" style="left:23px;top:489.0px;letter-spacing:-0.066px;">Tab height:</span>
<div class="in dis" style="left:102px;top:485px;width:30px;height:19px;line-height:16px"><span class="v">25</span></div>
<div class="g" style="left:14px;top:520px;width:128px;height:57px"></div>
<span class="t gl" style="left:21px;top:514.8px;padding:0 2px 0 5px;letter-spacing:-0.185px;">Section start #</span>
<span class="t " style="left:23px;top:540.8px;letter-spacing:-0.44px;">1st number</span>
<div class="in" style="left:103px;top:537px;width:30px;height:19px;line-height:16px"><span class="v">1</span></div>
<div class="g" style="left:160px;top:233px;width:482px;height:349px"></div>
<span class="t gl" style="left:167px;top:227.8px;padding:0 2px 0 5px;letter-spacing:-0.305px;">Spans and Supports</span>
<div class="g" style="left:169px;top:254px;width:149px;height:294px"></div>
<span class="t gl" style="left:176px;top:248.8px;padding:0 2px 0 5px;letter-spacing:-0.273px;">Support 0</span>
<span class="t " style="left:178px;top:275.8px;letter-spacing:-0.256px;">Col.0 width:</span>
<div class="in" style="left:264px;top:272px;width:30px;height:19px;line-height:16px"><span class="v">80</span></div>
<span class="t " style="left:178px;top:295.8px;letter-spacing:-0.525px;">--------------</span>
<div class="ck" style="left:178px;top:314px;border-color:#333;background:#fff"><svg width="11" height="11" viewBox="0 0 11 11" style="position:absolute;left:0;top:0"><path d="M0.8 4.6 L3.9 7.8 L10.4 0.8" fill="none" stroke="#222" stroke-width="1.2"/></svg></div>
<span class="t " style="left:194px;top:314.8px;letter-spacing:-0.18px;">Left cantilever</span>
<span class="t " style="left:178px;top:340.8px;letter-spacing:-0.183px;">Span width:</span>
<div class="in" style="left:264px;top:337px;width:30px;height:19px;line-height:16px"><span class="v">120</span></div>
<span class="t " style="left:178px;top:360.8px;letter-spacing:-0.009px;">Top steel layer 1/2</span>
<div class="cb" style="left:178px;top:381px;width:35px;height:21px;line-height:20.6px;padding-left:5.2px;"><span class="v" style="">6</span><svg class="chev" width="10" height="6" viewBox="0 0 10 6" style="left:20.4px;top:7px"><path d="M0.5 0.7 L5 5.2 L9.5 0.7" fill="none" stroke="#3c3c3c" stroke-width="1.1"/></svg></div>
<div class="cb" style="left:221px;top:381px;width:35px;height:21px;line-height:20.6px;padding-left:2.6px;"><span class="v" style="letter-spacing:-1.1px;">14</span><svg class="chev" width="10" height="6" viewBox="0 0 10 6" style="left:20.4px;top:7px"><path d="M0.5 0.7 L5 5.2 L9.5 0.7" fill="none" stroke="#3c3c3c" stroke-width="1.1"/></svg></div>
<span class="t " style="left:264px;top:385.8px;">L</span>
<div class="in" style="left:279px;top:382px;width:30px;height:19px;line-height:16px"><span class="v">400</span></div>
<div class="ck" style="left:178px;top:406px;border-color:#333;background:#fff"><svg width="11" height="11" viewBox="0 0 11 11" style="position:absolute;left:0;top:0"><path d="M0.8 4.6 L3.9 7.8 L10.4 0.8" fill="none" stroke="#222" stroke-width="1.2"/></svg></div>
<div class="cb" style="left:178px;top:429px;width:35px;height:21px;line-height:20.6px;padding-left:5.2px;"><span class="v" style="">4</span><svg class="chev" width="10" height="6" viewBox="0 0 10 6" style="left:20.4px;top:7px"><path d="M0.5 0.7 L5 5.2 L9.5 0.7" fill="none" stroke="#3c3c3c" stroke-width="1.1"/></svg></div>
<div class="cb" style="left:221px;top:429px;width:35px;height:21px;line-height:20.6px;padding-left:2.6px;"><span class="v" style="letter-spacing:-1.1px;">10</span><svg class="chev" width="10" height="6" viewBox="0 0 10 6" style="left:20.4px;top:7px"><path d="M0.5 0.7 L5 5.2 L9.5 0.7" fill="none" stroke="#3c3c3c" stroke-width="1.1"/></svg></div>
<span class="t " style="left:264px;top:433.8px;">L</span>
<div class="in" style="left:279px;top:430px;width:30px;height:19px;line-height:16px"><span class="v">300</span></div>
<span class="t " style="left:178px;top:454.8px;letter-spacing:-0.628px;">Stirrups</span>
<div class="cb" style="left:178px;top:475px;width:35px;height:21px;line-height:20.6px;padding-left:5.2px;"><span class="v" style="">1</span><svg class="chev" width="10" height="6" viewBox="0 0 10 6" style="left:20.4px;top:7px"><path d="M0.5 0.7 L5 5.2 L9.5 0.7" fill="none" stroke="#3c3c3c" stroke-width="1.1"/></svg></div>
<span class="t " style="left:221px;top:478.8px;">T</span>
<div class="cb" style="left:239px;top:475px;width:35px;height:21px;line-height:20.6px;padding-left:2.6px;"><span class="v" style="">8</span><svg class="chev" width="10" height="6" viewBox="0 0 10 6" style="left:20.4px;top:7px"><path d="M0.5 0.7 L5 5.2 L9.5 0.7" fill="none" stroke="#3c3c3c" stroke-width="1.1"/></svg></div>
<div class="in" style="left:178px;top:502px;width:21px;height:19px;line-height:16px"><span class="v"></span></div>
<div class="in" style="left:207px;top:502px;width:21px;height:19px;line-height:16px"><span class="v">10</span></div>
<span class="t " style="left:236px;top:504.8px;">+</span>
<div class="in" style="left:254px;top:502px;width:21px;height:19px;line-height:16px"><span class="v"></span></div>
<div class="in" style="left:283px;top:502px;width:21px;height:19px;line-height:16px"><span class="v">15</span></div>
<span class="t " style="left:178px;top:529.8px;letter-spacing:-0.621px;">+n.</span>
<div class="in" style="left:208px;top:527px;width:21px;height:19px;line-height:16px"><span class="v">20</span></div>
<div class="g" style="left:483px;top:254px;width:149px;height:294px"></div>
<span class="t gl" style="left:490px;top:248.8px;padding:0 2px 0 5px;letter-spacing:-0.423px;">Support 1</span>
<span class="t " style="left:492px;top:275.8px;letter-spacing:-0.192px;">Col.1 width:</span>
<div class="in" style="left:578px;top:272px;width:30px;height:19px;line-height:16px"><span class="v">60</span></div>
<span class="t " style="left:492px;top:295.8px;letter-spacing:-0.525px;">--------------</span>
<div class="ck" style="left:492px;top:314px;border-color:#333;background:#fff"><svg width="11" height="11" viewBox="0 0 11 11" style="position:absolute;left:0;top:0"><path d="M0.8 4.6 L3.9 7.8 L10.4 0.8" fill="none" stroke="#222" stroke-width="1.2"/></svg></div>
<span class="t " style="left:508px;top:314.8px;letter-spacing:-0.163px;">Right cantilever</span>
<span class="t " style="left:492px;top:340.8px;letter-spacing:-0.183px;">Span width:</span>
<div class="in" style="left:578px;top:337px;width:30px;height:19px;line-height:16px"><span class="v">150</span></div>
<span class="t " style="left:492px;top:360.8px;letter-spacing:-0.009px;">Top steel layer 1/2</span>
<div class="cb" style="left:492px;top:381px;width:35px;height:21px;line-height:20.6px;padding-left:5.2px;"><span class="v" style="">6</span><svg class="chev" width="10" height="6" viewBox="0 0 10 6" style="left:20.4px;top:7px"><path d="M0.5 0.7 L5 5.2 L9.5 0.7" fill="none" stroke="#3c3c3c" stroke-width="1.1"/></svg></div>
<div class="cb" style="left:535px;top:381px;width:35px;height:21px;line-height:20.6px;padding-left:2.6px;"><span class="v" style="letter-spacing:-1.1px;">16</span><svg class="chev" width="10" height="6" viewBox="0 0 10 6" style="left:20.4px;top:7px"><path d="M0.5 0.7 L5 5.2 L9.5 0.7" fill="none" stroke="#3c3c3c" stroke-width="1.1"/></svg></div>
<span class="t " style="left:578px;top:385.8px;">L</span>
<div class="in" style="left:593px;top:382px;width:30px;height:19px;line-height:16px"><span class="v">400</span></div>
<div class="ck" style="left:492px;top:406px;border-color:#333;background:#fff"><svg width="11" height="11" viewBox="0 0 11 11" style="position:absolute;left:0;top:0"><path d="M0.8 4.6 L3.9 7.8 L10.4 0.8" fill="none" stroke="#222" stroke-width="1.2"/></svg></div>
<div class="cb" style="left:492px;top:429px;width:35px;height:21px;line-height:20.6px;padding-left:5.2px;"><span class="v" style="">4</span><svg class="chev" width="10" height="6" viewBox="0 0 10 6" style="left:20.4px;top:7px"><path d="M0.5 0.7 L5 5.2 L9.5 0.7" fill="none" stroke="#3c3c3c" stroke-width="1.1"/></svg></div>
<div class="cb" style="left:535px;top:429px;width:35px;height:21px;line-height:20.6px;padding-left:2.6px;"><span class="v" style="letter-spacing:-1.1px;">12</span><svg class="chev" width="10" height="6" viewBox="0 0 10 6" style="left:20.4px;top:7px"><path d="M0.5 0.7 L5 5.2 L9.5 0.7" fill="none" stroke="#3c3c3c" stroke-width="1.1"/></svg></div>
<span class="t " style="left:578px;top:433.8px;">L</span>
<div class="in" style="left:593px;top:430px;width:30px;height:19px;line-height:16px"><span class="v">300</span></div>
<span class="t " style="left:492px;top:454.8px;letter-spacing:-0.628px;">Stirrups</span>
<div class="cb" style="left:492px;top:475px;width:35px;height:21px;line-height:20.6px;padding-left:5.2px;"><span class="v" style="">3</span><svg class="chev" width="10" height="6" viewBox="0 0 10 6" style="left:20.4px;top:7px"><path d="M0.5 0.7 L5 5.2 L9.5 0.7" fill="none" stroke="#3c3c3c" stroke-width="1.1"/></svg></div>
<span class="t " style="left:535px;top:478.8px;">T</span>
<div class="cb" style="left:553px;top:475px;width:35px;height:21px;line-height:20.6px;padding-left:2.6px;"><span class="v" style="">8</span><svg class="chev" width="10" height="6" viewBox="0 0 10 6" style="left:20.4px;top:7px"><path d="M0.5 0.7 L5 5.2 L9.5 0.7" fill="none" stroke="#3c3c3c" stroke-width="1.1"/></svg></div>
<div class="in" style="left:492px;top:502px;width:21px;height:19px;line-height:16px"><span class="v"></span></div>
<div class="in" style="left:521px;top:502px;width:21px;height:19px;line-height:16px"><span class="v">10</span></div>
<span class="t " style="left:550px;top:504.8px;">+</span>
<div class="in" style="left:568px;top:502px;width:21px;height:19px;line-height:16px"><span class="v">2</span></div>
<div class="in" style="left:597px;top:502px;width:21px;height:19px;line-height:16px"><span class="v">15</span></div>
<span class="t " style="left:492px;top:529.8px;letter-spacing:-0.621px;">+n.</span>
<div class="in" style="left:522px;top:527px;width:21px;height:19px;line-height:16px"><span class="v">20</span></div>
<div class="g" style="left:326px;top:254px;width:149px;height:323px"></div>
<span class="t gl" style="left:333px;top:248.8px;padding:0 2px 0 5px;letter-spacing:-0.529px;">Span 1</span>
<span class="t " style="left:335px;top:275.8px;letter-spacing:-0.231px;">Span1 width:</span>
<div class="in" style="left:429px;top:272px;width:30px;height:19px;line-height:16px"><span class="v">500</span></div>
<span class="t " style="left:335px;top:295.8px;letter-spacing:-0.009px;">Top steel layer 1/2</span>
<div class="cb" style="left:335px;top:316px;width:35px;height:21px;line-height:20.6px;padding-left:5.2px;"><span class="v" style="">6</span><svg class="chev" width="10" height="6" viewBox="0 0 10 6" style="left:20.4px;top:7px"><path d="M0.5 0.7 L5 5.2 L9.5 0.7" fill="none" stroke="#3c3c3c" stroke-width="1.1"/></svg></div>
<div class="cb" style="left:378px;top:316px;width:35px;height:21px;line-height:20.6px;padding-left:2.6px;"><span class="v" style="letter-spacing:-1.1px;">12</span><svg class="chev" width="10" height="6" viewBox="0 0 10 6" style="left:20.4px;top:7px"><path d="M0.5 0.7 L5 5.2 L9.5 0.7" fill="none" stroke="#3c3c3c" stroke-width="1.1"/></svg></div>
<span class="t " style="left:421px;top:320.8px;">L</span>
<div class="in" style="left:436px;top:317px;width:30px;height:19px;line-height:16px"><span class="v">400</span></div>
<div class="ck" style="left:335px;top:341px;border-color:#333;background:#fff"><svg width="11" height="11" viewBox="0 0 11 11" style="position:absolute;left:0;top:0"><path d="M0.8 4.6 L3.9 7.8 L10.4 0.8" fill="none" stroke="#222" stroke-width="1.2"/></svg></div>
<div class="cb" style="left:335px;top:364px;width:35px;height:21px;line-height:20.6px;padding-left:5.2px;"><span class="v" style="">4</span><svg class="chev" width="10" height="6" viewBox="0 0 10 6" style="left:20.4px;top:7px"><path d="M0.5 0.7 L5 5.2 L9.5 0.7" fill="none" stroke="#3c3c3c" stroke-width="1.1"/></svg></div>
<div class="cb" style="left:378px;top:364px;width:35px;height:21px;line-height:20.6px;padding-left:2.6px;"><span class="v" style="letter-spacing:-1.1px;">10</span><svg class="chev" width="10" height="6" viewBox="0 0 10 6" style="left:20.4px;top:7px"><path d="M0.5 0.7 L5 5.2 L9.5 0.7" fill="none" stroke="#3c3c3c" stroke-width="1.1"/></svg></div>
<span class="t " style="left:421px;top:368.8px;">L</span>
<div class="in" style="left:436px;top:365px;width:30px;height:19px;line-height:16px"><span class="v">300</span></div>
<span class="t " style="left:335px;top:390.8px;letter-spacing:-0.628px;">Stirrups</span>
<div class="cb" style="left:335px;top:410px;width:35px;height:21px;line-height:20.6px;padding-left:5.2px;"><span class="v" style="">3</span><svg class="chev" width="10" height="6" viewBox="0 0 10 6" style="left:20.4px;top:7px"><path d="M0.5 0.7 L5 5.2 L9.5 0.7" fill="none" stroke="#3c3c3c" stroke-width="1.1"/></svg></div>
<span class="t " style="left:378px;top:413.8px;">T</span>
<div class="cb" style="left:396px;top:410px;width:35px;height:21px;line-height:20.6px;padding-left:2.6px;"><span class="v" style="">8</span><svg class="chev" width="10" height="6" viewBox="0 0 10 6" style="left:20.4px;top:7px"><path d="M0.5 0.7 L5 5.2 L9.5 0.7" fill="none" stroke="#3c3c3c" stroke-width="1.1"/></svg></div>
<div class="in" style="left:335px;top:437px;width:21px;height:19px;line-height:16px"><span class="v">5</span></div>
<div class="in" style="left:364px;top:437px;width:21px;height:19px;line-height:16px"><span class="v">10</span></div>
<span class="t " style="left:393px;top:439.8px;">+</span>
<div class="in" style="left:411px;top:437px;width:21px;height:19px;line-height:16px"><span class="v">5</span></div>
<div class="in" style="left:440px;top:437px;width:21px;height:19px;line-height:16px"><span class="v">15</span></div>
<span class="t " style="left:335px;top:465.0px;letter-spacing:-0.621px;">+n.</span>
<div class="in" style="left:365px;top:462px;width:21px;height:19px;line-height:16px"><span class="v">20</span></div>
<span class="t " style="left:335px;top:486.8px;letter-spacing:-0.157px;">Bot. steel layer 2/1</span>
<div class="cb" style="left:335px;top:506px;width:35px;height:21px;line-height:20.6px;padding-left:5.2px;"><span class="v" style="">4</span><svg class="chev" width="10" height="6" viewBox="0 0 10 6" style="left:20.4px;top:7px"><path d="M0.5 0.7 L5 5.2 L9.5 0.7" fill="none" stroke="#3c3c3c" stroke-width="1.1"/></svg></div>
<div class="cb" style="left:378px;top:506px;width:35px;height:21px;line-height:20.6px;padding-left:2.6px;"><span class="v" style="letter-spacing:-1.1px;">14</span><svg class="chev" width="10" height="6" viewBox="0 0 10 6" style="left:20.4px;top:7px"><path d="M0.5 0.7 L5 5.2 L9.5 0.7" fill="none" stroke="#3c3c3c" stroke-width="1.1"/></svg></div>
<span class="t " style="left:421px;top:510.8px;">L</span>
<div class="in" style="left:436px;top:507px;width:30px;height:19px;line-height:16px"><span class="v">500</span></div>
<div class="ck" style="left:335px;top:531px;border-color:#333;background:#fff"><svg width="11" height="11" viewBox="0 0 11 11" style="position:absolute;left:0;top:0"><path d="M0.8 4.6 L3.9 7.8 L10.4 0.8" fill="none" stroke="#222" stroke-width="1.2"/></svg></div>
<div class="cb" style="left:335px;top:554px;width:35px;height:21px;line-height:20.6px;padding-left:5.2px;"><span class="v" style="">6</span><svg class="chev" width="10" height="6" viewBox="0 0 10 6" style="left:20.4px;top:7px"><path d="M0.5 0.7 L5 5.2 L9.5 0.7" fill="none" stroke="#3c3c3c" stroke-width="1.1"/></svg></div>
<div class="cb" style="left:378px;top:554px;width:35px;height:21px;line-height:20.6px;padding-left:2.6px;"><span class="v" style="letter-spacing:-1.1px;">20</span><svg class="chev" width="10" height="6" viewBox="0 0 10 6" style="left:20.4px;top:7px"><path d="M0.5 0.7 L5 5.2 L9.5 0.7" fill="none" stroke="#3c3c3c" stroke-width="1.1"/></svg></div>
<span class="t " style="left:421px;top:558.8px;">L</span>
<div class="in" style="left:436px;top:555px;width:30px;height:19px;line-height:16px"><span class="v">900</span></div>
<div class="g" style="left:5px;top:594px;width:544px;height:42px"></div>
<span class="t gl" style="left:12.5px;top:588.8px;padding:0 2px 0 5px;letter-spacing:-0.311px;">Side bars for drop beam</span>
<div class="ck" style="left:14px;top:613px;border-color:#bcbcbc;background:#f7f7f7"><svg width="11" height="11" viewBox="0 0 11 11" style="position:absolute;left:0;top:0"><path d="M0.8 4.6 L3.9 7.8 L10.4 0.8" fill="none" stroke="#bcbcbc" stroke-width="1.2"/></svg></div>
<div class="cb dis" style="left:38px;top:612px;width:35px;height:21px;line-height:20.6px;padding-left:5.2px;"><span class="v" style="">6</span><svg class="chev" width="10" height="6" viewBox="0 0 10 6" style="left:20.4px;top:7px"><path d="M0.5 0.7 L5 5.2 L9.5 0.7" fill="none" stroke="#9a9a9a" stroke-width="1.1"/></svg></div>
<div class="cb dis" style="left:81px;top:612px;width:35px;height:21px;line-height:20.6px;padding-left:2.6px;"><span class="v" style="letter-spacing:-1.1px;">10</span><svg class="chev" width="10" height="6" viewBox="0 0 10 6" style="left:20.4px;top:7px"><path d="M0.5 0.7 L5 5.2 L9.5 0.7" fill="none" stroke="#9a9a9a" stroke-width="1.1"/></svg></div>
<span class="t dl" style="left:125px;top:616.8px;">L</span>
<div class="in dis" style="left:139px;top:613px;width:30px;height:19px;line-height:16px"><span class="v">400</span></div>
<div class="bt" style="left:216px;top:611px;width:156px;height:20px;line-height:18.6px"><span style="letter-spacing:-0.113px;">Pick insertion point &lt;</span></div>
<span class="t " style="left:381px;top:616.8px;letter-spacing:-0.337px;">X:</span>
<div class="in" style="left:400px;top:613px;width:57px;height:19px;line-height:16px"><span class="v">0</span></div>
<span class="t " style="left:465px;top:616.8px;letter-spacing:0.27px;">Y:</span>
<div class="in" style="left:484px;top:613px;width:57px;height:19px;line-height:16px"><span class="v">0</span></div>
<div class="g" style="left:5px;top:648px;width:638px;height:42px"></div>
<span class="t gl" style="left:11.5px;top:642.3px;padding:0 2px 0 5px;letter-spacing:-0.116px;">Quit / Quit and Draw</span>
<div class="bt df" style="left:184px;top:665px;width:55px;height:20px;line-height:16.6px"><span style="letter-spacing:-0.7px;">OK</span></div>
<div class="ck" style="left:289px;top:667px;border-color:#333;background:#fff"><svg width="11" height="11" viewBox="0 0 11 11" style="position:absolute;left:0;top:0"><path d="M0.8 4.6 L3.9 7.8 L10.4 0.8" fill="none" stroke="#222" stroke-width="1.2"/></svg></div>
<span class="t " style="left:305px;top:667.8px;letter-spacing:-0.209px;">Draw Section</span>
<div class="bt" style="left:440px;top:665px;width:121px;height:20px;line-height:18.6px"><span style="letter-spacing:-0.34px;">OK+Draw</span></div>
<div class="bt" style="left:571px;top:665px;width:62px;height:20px;line-height:18.6px"><span style="letter-spacing:-0.289px;">Help...</span></div>
<div class="abs" style="left:0;top:698px;width:646px;height:2px;background:#1a1a1a"></div>
</body></html>
